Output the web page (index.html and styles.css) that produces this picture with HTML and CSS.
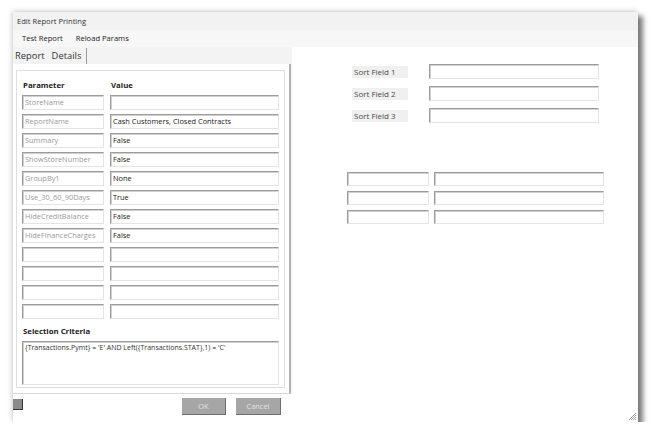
FILE: index.html
```html
<!DOCTYPE html>
<html>
<head>
<meta charset="utf-8">
<link rel="stylesheet" href="styles.css">
</head>
<body>
<div class="window">
  <div class="titlebar">Edit Report Printing</div>
  <div class="menubar"><span>Test Report</span><span>Reload Params</span></div>
  <div class="main">
    <div class="left">
      <div class="tabs"><span class="tab">Report</span><span class="tab active">Details</span></div>
      <div class="panel">
        <div class="box">
          <div class="grid">
            <div class="hdr">Parameter</div><div class="hdr">Value</div>
            <div class="field param">StoreName</div><div class="field"></div>
            <div class="field param">ReportName</div><div class="field">Cash Customers, Closed Contracts</div>
            <div class="field param">Summary</div><div class="field">False</div>
            <div class="field param">ShowStoreNumber</div><div class="field">False</div>
            <div class="field param">GroupBy1</div><div class="field">None</div>
            <div class="field param">Use_30_60_90Days</div><div class="field">True</div>
            <div class="field param">HideCreditBalance</div><div class="field">False</div>
            <div class="field param">HideFinanceCharges</div><div class="field">False</div>
            <div class="field param"></div><div class="field"></div>
            <div class="field param"></div><div class="field"></div>
            <div class="field param"></div><div class="field"></div>
            <div class="field param"></div><div class="field"></div>
          </div>
          <div class="sel-label">Selection Criteria</div>
          <div class="field textarea">{Transactions.Pymt} = 'E' AND Left({Transactions.STAT},1) = 'C'</div>
        </div>
      </div>
      <div class="footer">
        <span class="mini-btn"></span>
        <span class="btn ok">OK</span>
        <span class="btn cancel">Cancel</span>
      </div>
    </div>
    <div class="right">
      <div class="sorts">
        <div class="sort-row"><span class="sort-label">Sort Field 1</span><span class="field sort-field"></span></div>
        <div class="sort-row"><span class="sort-label">Sort Field 2</span><span class="field sort-field"></span></div>
        <div class="sort-row"><span class="sort-label">Sort Field 3</span><span class="field sort-field"></span></div>
      </div>
      <div class="pairs">
        <span class="field"></span><span class="field"></span>
        <span class="field"></span><span class="field"></span>
        <span class="field"></span><span class="field"></span>
      </div>
    </div>
  </div>
  <svg class="grip" width="10" height="10" viewBox="0 0 10 10">
    <path d="M9 2 L2 9 M9 4 L4 9 M9 6 L6 9 M9 8 L8 9" stroke="#a8a8a8" stroke-width="1" fill="none"/>
  </svg>
</div>
</body>
</html>
```

FILE: styles.css
```css
* { box-sizing: border-box; }
html, body {
  margin: 0;
  padding: 0;
  background: #ffffff;
  font-family: "Open Sans", "Noto Sans", sans-serif;
  color: #222;
}
body { padding: 12px 0 0 13px; }

.window {
  position: relative;
  width: 625px;
  height: 410px;
  background: #ffffff;
  display: flex;
  flex-direction: column;
  box-shadow: 5px 4px 5px rgba(0,0,0,0.5), -1px -1px 5px rgba(0,0,0,0.2);
}

.titlebar {
  height: 18px;
  background: #f2f2f2;
  font-size: 7.6px;
  line-height: 18px;
  padding-left: 4px;
  color: #333;
}

.menubar {
  height: 17px;
  background: #f7f7f7;
  font-size: 7.6px;
  line-height: 17px;
  padding-left: 9px;
  display: flex;
  gap: 13px;
  color: #222;
}

.main {
  flex: 1;
  display: flex;
}

.left {
  width: 279px;
  display: flex;
  flex-direction: column;
  background: #f3f3f3;
}

.tabs {
  height: 17px;
  display: flex;
  align-items: flex-end;
  padding-left: 2px;
  font-size: 9.4px;
  color: #333;
}
.tab {
  height: 16px;
  line-height: 15px;
  padding: 0 3px 0 0;
}
.tab.active {
  padding: 0 5px 0 4px;
  border-right: 1px solid #9a9a9a;
}

.panel {
  height: 330px;
  background: #ffffff;
  padding: 6px 0 5px 3px;
  border-right: 2px solid #b2b2b2;
  border-bottom: 1px solid #d8d8d8;
  margin-right: 1px;
}

.box {
  width: 269px;
  height: 318px;
  border: 1px solid #dedede;
  padding: 8px 0 0 5px;
}

.grid {
  display: grid;
  grid-template-columns: 82px 169px;
  grid-template-rows: 12px;
  grid-auto-rows: 15px;
  column-gap: 6px;
  row-gap: 4px;
}
.grid .hdr {
  font-size: 7.8px;
  font-weight: 700;
  line-height: 12px;
  height: 12px;
  padding-left: 1px;
  color: #222;
}

.field {
  display: block;
  height: 15px;
  border: 1px solid;
  border-color: #9c9c9c #e4e4e4 #e4e4e4 #9c9c9c;
  box-shadow: inset 1px 1px 0 #d0d0d0;
  background: #ffffff;
  font-size: 7.4px;
  line-height: 13px;
  padding-left: 2px;
  color: #1a1a1a;
  white-space: nowrap;
  overflow: hidden;
}
.field.param { color: #9a9a9a; }

.sel-label {
  margin-top: 6px;
  height: 12px;
  line-height: 12px;
  font-size: 7.8px;
  font-weight: 700;
  padding-left: 1px;
}
.textarea {
  margin-top: 4px;
  width: 257px;
  height: 44px;
  font-size: 7px;
  line-height: 12px;
  color: #333;
}

.footer {
  flex: 1;
  background: #ffffff;
  position: relative;
  display: flex;
  align-items: flex-start;
  padding-top: 4px;
}
.mini-btn {
  width: 10px;
  height: 11px;
  margin-top: 1px;
  background: #8a8a8a;
  border-right: 1px solid #333;
  border-bottom: 1px solid #333;
}
.btn {
  height: 17px;
  background: #a6a6a6;
  border-bottom: 1px solid #6e6e6e;
  border-right: 1px solid #6e6e6e;
  color: #e2e2e2;
  font-size: 7.4px;
  line-height: 16px;
  text-align: center;
}
.ok { width: 44px; margin-left: 159px; }
.cancel { width: 45px; margin-left: 10px; }

.right {
  flex: 1;
  background: #ffffff;
  padding: 17px 0 0 55px;
}

.sorts {
  display: flex;
  flex-direction: column;
  gap: 7px;
  padding-left: 5px;
}
.sort-row {
  display: flex;
  align-items: center;
  height: 15px;
}
.sort-label {
  width: 56px;
  height: 12px;
  background: #f0f0f0;
  font-size: 8px;
  line-height: 12px;
  padding-left: 2px;
  color: #4a4a4a;
}
.sort-field {
  width: 170px;
  margin-left: 21px;
}

.pairs {
  margin-top: 49px;
  display: grid;
  grid-template-columns: 82px 170px;
  grid-auto-rows: 14px;
  column-gap: 5px;
  row-gap: 5px;
}
.pairs .field { height: 14px; }

.grip {
  position: absolute;
  right: 1px;
  bottom: 1px;
}
```
